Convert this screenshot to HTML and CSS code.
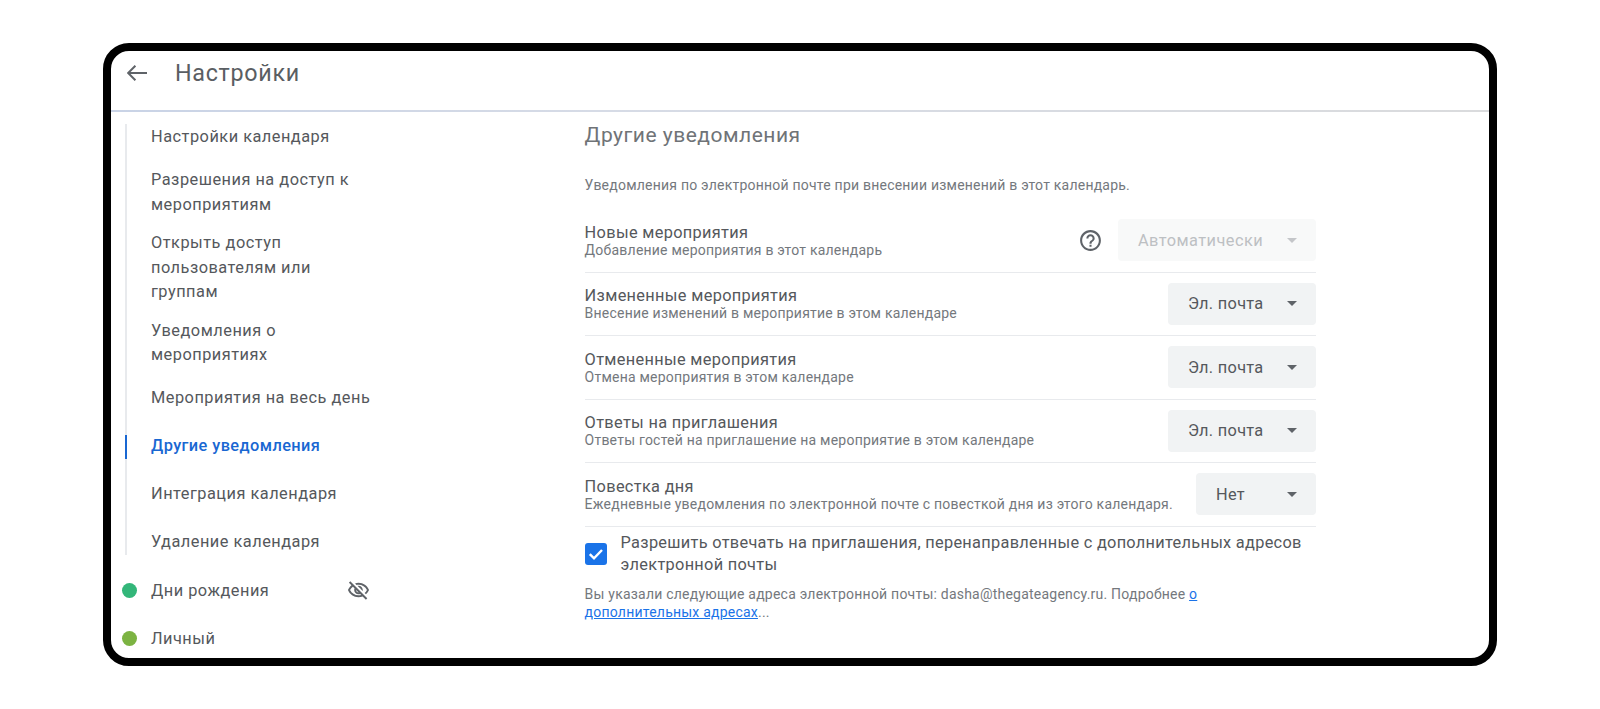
FILE: index.html
```html
<!DOCTYPE html>
<html lang="ru">
<head>
<meta charset="utf-8">
<title>Настройки</title>
<link rel="stylesheet" href="styles.css">
</head>
<body>
<div class="frame">
  <header class="header">
    <svg class="back" viewBox="0 0 20 16" width="20" height="16"><path d="M20 8H1.2M8.4 .7 1.1 8l7.3 7.3" fill="none" stroke="#5f6368" stroke-width="2"/></svg>
    <h1 class="page-title">Настройки</h1>
  </header>
  <div class="main">
    <nav class="nav">
      <ul class="rail">
        <li class="nav-item">Настройки календаря</li>
        <li class="nav-item">Разрешения на доступ к мероприятиям</li>
        <li class="nav-item">Открыть доступ пользователям или группам</li>
        <li class="nav-item">Уведомления о мероприятиях</li>
        <li class="nav-item">Мероприятия на весь день</li>
        <li class="nav-item active">Другие уведомления</li>
        <li class="nav-item">Интеграция календаря</li>
        <li class="nav-item">Удаление календаря</li>
      </ul>
      <div class="cal-item">
        <span class="dot dot-green"></span>
        <span class="cal-name">Дни рождения</span>
        <svg class="eye" viewBox="0 0 24 24" width="23" height="23"><path fill="#5f6368" d="M12 6c3.79 0 7.17 2.13 8.82 5.5-.59 1.22-1.42 2.27-2.41 3.12l1.41 1.41c1.39-1.23 2.49-2.77 3.18-4.53C21.27 7.11 17 4 12 4c-1.27 0-2.49.2-3.64.57l1.65 1.65C10.66 6.09 11.32 6 12 6zm-1.07 1.14L13 9.21c.57.25 1.03.71 1.28 1.28l2.07 2.07c.08-.34.14-.7.14-1.07C16.5 9.01 14.48 7 12 7c-.37 0-.72.05-1.07.14zM2.01 3.87l2.68 2.68C3.06 7.83 1.77 9.53 1 11.5 2.73 15.89 7 19 12 19c1.52 0 2.98-.29 4.32-.82l3.42 3.42 1.41-1.41L3.42 2.45 2.01 3.87zm7.5 7.5l2.61 2.61c-.04.01-.08.02-.12.02-1.38 0-2.5-1.12-2.5-2.5 0-.05.01-.08.01-.13zm-3.4-3.4l1.75 1.75c-.23.55-.36 1.15-.36 1.77 0 2.48 2.02 4.5 4.5 4.5.62 0 1.22-.13 1.76-.36l.98.98c-.88.24-1.8.38-2.74.38-3.79 0-7.17-2.13-8.82-5.5.7-1.43 1.72-2.61 2.93-3.52z"/></svg>
      </div>
      <div class="cal-item">
        <span class="dot dot-olive"></span>
        <span class="cal-name">Личный</span>
      </div>
    </nav>
    <section class="content">
      <h2 class="section-title">Другие уведомления</h2>
      <p class="intro">Уведомления по электронной почте при внесении изменений в этот календарь.</p>
      <div class="row">
        <div class="row-text">
          <div class="row-title">Новые мероприятия</div>
          <div class="row-sub">Добавление мероприятия в этот календарь</div>
        </div>
        <svg class="help" viewBox="0 0 24 24" width="25" height="25"><path fill="#5f6368" d="M11 18h2v-2h-2v2zm1-16C6.48 2 2 6.48 2 12s4.48 10 10 10 10-4.48 10-10S17.52 2 12 2zm0 18c-4.41 0-8-3.59-8-8s3.59-8 8-8 8 3.59 8 8-3.59 8-8 8zm0-14c-2.21 0-4 1.79-4 4h2c0-1.1.9-2 2-2s2 .9 2 2c0 2-3 1.75-3 5h2c0-2.25 3-2.5 3-5 0-2.21-1.79-4-4-4z"/></svg>
        <div class="select disabled select-auto"><span>Автоматически</span><i class="caret"></i></div>
      </div>
      <div class="row">
        <div class="row-text">
          <div class="row-title">Измененные мероприятия</div>
          <div class="row-sub">Внесение изменений в мероприятие в этом календаре</div>
        </div>
        <div class="select select-mail"><span>Эл. почта</span><i class="caret"></i></div>
      </div>
      <div class="row">
        <div class="row-text">
          <div class="row-title">Отмененные мероприятия</div>
          <div class="row-sub">Отмена мероприятия в этом календаре</div>
        </div>
        <div class="select select-mail"><span>Эл. почта</span><i class="caret"></i></div>
      </div>
      <div class="row">
        <div class="row-text">
          <div class="row-title">Ответы на приглашения</div>
          <div class="row-sub">Ответы гостей на приглашение на мероприятие в этом календаре</div>
        </div>
        <div class="select select-mail"><span>Эл. почта</span><i class="caret"></i></div>
      </div>
      <div class="row">
        <div class="row-text">
          <div class="row-title">Повестка дня</div>
          <div class="row-sub">Ежедневные уведомления по электронной почте с повесткой дня из этого календаря.</div>
        </div>
        <div class="select select-no"><span>Нет</span><i class="caret"></i></div>
      </div>
      <div class="check-row">
        <span class="checkbox"><svg viewBox="0 0 22 22" width="22" height="22"><path d="M4.8 11.2l4.2 4.2 8-8.4" fill="none" stroke="#fff" stroke-width="2.4"/></svg></span>
        <span class="check-label">Разрешить отвечать на приглашения, перенаправленные с дополнительных адресов электронной почты</span>
      </div>
      <p class="foot">Вы указали следующие адреса электронной почты: dasha@thegateagency.ru. Подробнее <a class="link" href="#">о дополнительных адресах</a>...</p>
    </section>
  </div>
</div>
</body>
</html>
```
FILE: styles.css
```css
* { box-sizing: border-box; }
html, body { margin: 0; padding: 0; height: 100%; background: #fff; }
body {
  padding: 43px 103px;
  font-family: Roboto, "Noto Sans", sans-serif;
  color: #5f6368;
  overflow: hidden;
}
.frame {
  width: 1394px;
  height: 623px;
  border: 8px solid #000;
  border-radius: 26px;
  background: #fff;
  overflow: hidden;
}
.header {
  height: 61px;
  display: flex;
  align-items: flex-start;
  padding: 14px 0 0 16px;
  border-bottom: 2px solid;
  border-image: linear-gradient(90deg, #c9d3e6 0%, #d6dbe6 35%, #dadbdd 100%) 1;
}
.back { flex: none; }
.page-title {
  margin: -7px 0 0 28px;
  font-size: 23.3px;
  font-weight: 400;
  line-height: 30px;
  color: #5a5e63;
  letter-spacing: .7px;
}
.main { display: flex; }
.nav { width: 473.6px; flex: none; padding-left: 14px; }
.rail {
  display: flow-root;
  list-style: none;
  margin: 12px 0 12px;
  padding: 0 0 0 24px;
  border-left: 2px solid #e8eaed;
  width: 250px;
}
.nav-item {
  min-height: 48px;
  padding: 7px 0;
  display: flex;
  align-items: center;
  font-size: 16.33px;
  line-height: 24.5px;
  letter-spacing: .5px;
  color: #55585c;
  position: relative;
}
.nav-item:first-child { margin-top: -11px; }
.nav-item:last-child { margin-bottom: -12px; }
.nav-item.active { color: #1967d2; font-weight: 500; letter-spacing: .42px; }
.nav-item.active::before {
  content: "";
  position: absolute;
  left: -26px;
  top: 12px;
  width: 2px;
  height: 24px;
  background: #1967d2;
}
.cal-item {
  height: 48px;
  display: flex;
  align-items: center;
  font-size: 16.33px;
  letter-spacing: .5px;
  color: #55585c;
}
.dot { width: 15px; height: 15px; border-radius: 50%; margin-left: -3px; flex: none; }
.dot-green { background: #33b679; }
.dot-olive { background: #7cb342; }
.cal-name { margin-left: 14px; width: 196px; }
.eye { flex: none; }
.content { width: 731.4px; padding-top: 8px; }
.section-title {
  margin: 0;
  font-size: 21px;
  font-weight: 400;
  line-height: 30px;
  color: #6f7377;
  letter-spacing: .5px;
}
.intro {
  margin: 25px 0 0;
  font-size: 14px;
  line-height: 20px;
  height: 34px;
  letter-spacing: .22px;
  color: #74787d;
}
.row {
  height: 63.5px;
  display: flex;
  align-items: center;
  border-bottom: 1px solid #e8eaed;
}
.row-text { flex: 1; min-width: 0; padding-top: 1px; }
.row-title { font-size: 16.33px; line-height: 19px; color: #55585c; letter-spacing: .33px; }
.row-sub { font-size: 14px; line-height: 17px; color: #74787d; letter-spacing: .22px; }
.help { margin-right: 15px; flex: none; }
.select {
  height: 42px;
  display: flex;
  align-items: center;
  justify-content: space-between;
  padding: 0 19px 0 20px;
  background: #f1f3f4;
  border-radius: 4px;
  font-size: 16.33px;
  color: #55585c;
  letter-spacing: .3px;
  flex: none;
}
.select.disabled { background: #f8f9f9; color: #bdc0c3; letter-spacing: .45px; }
.select-auto { width: 198px; }
.select-mail { width: 148px; }
.select-no { width: 120px; }
.caret {
  width: 0; height: 0;
  border-left: 5px solid transparent;
  border-right: 5px solid transparent;
  border-top: 5px solid #5f6368;
}
.disabled .caret { border-top-color: #c4c6c9; }
.check-row {
  display: flex;
  align-items: center;
  padding-top: 5px;
}
.checkbox {
  width: 22px; height: 22px;
  flex: none;
  border-radius: 3px;
  background: #1a73e8;
  display: flex;
}
.check-label {
  margin-left: 14px;
  font-size: 16.33px;
  line-height: 22px;
  color: #55585c;
  letter-spacing: .3px;
  width: 695px;
}
.foot {
  margin: 9px 0 0;
  font-size: 14px;
  line-height: 18px;
  color: #74787d;
  letter-spacing: .22px;
  width: 640px;
}
.link { color: #1a73e8; }
```
